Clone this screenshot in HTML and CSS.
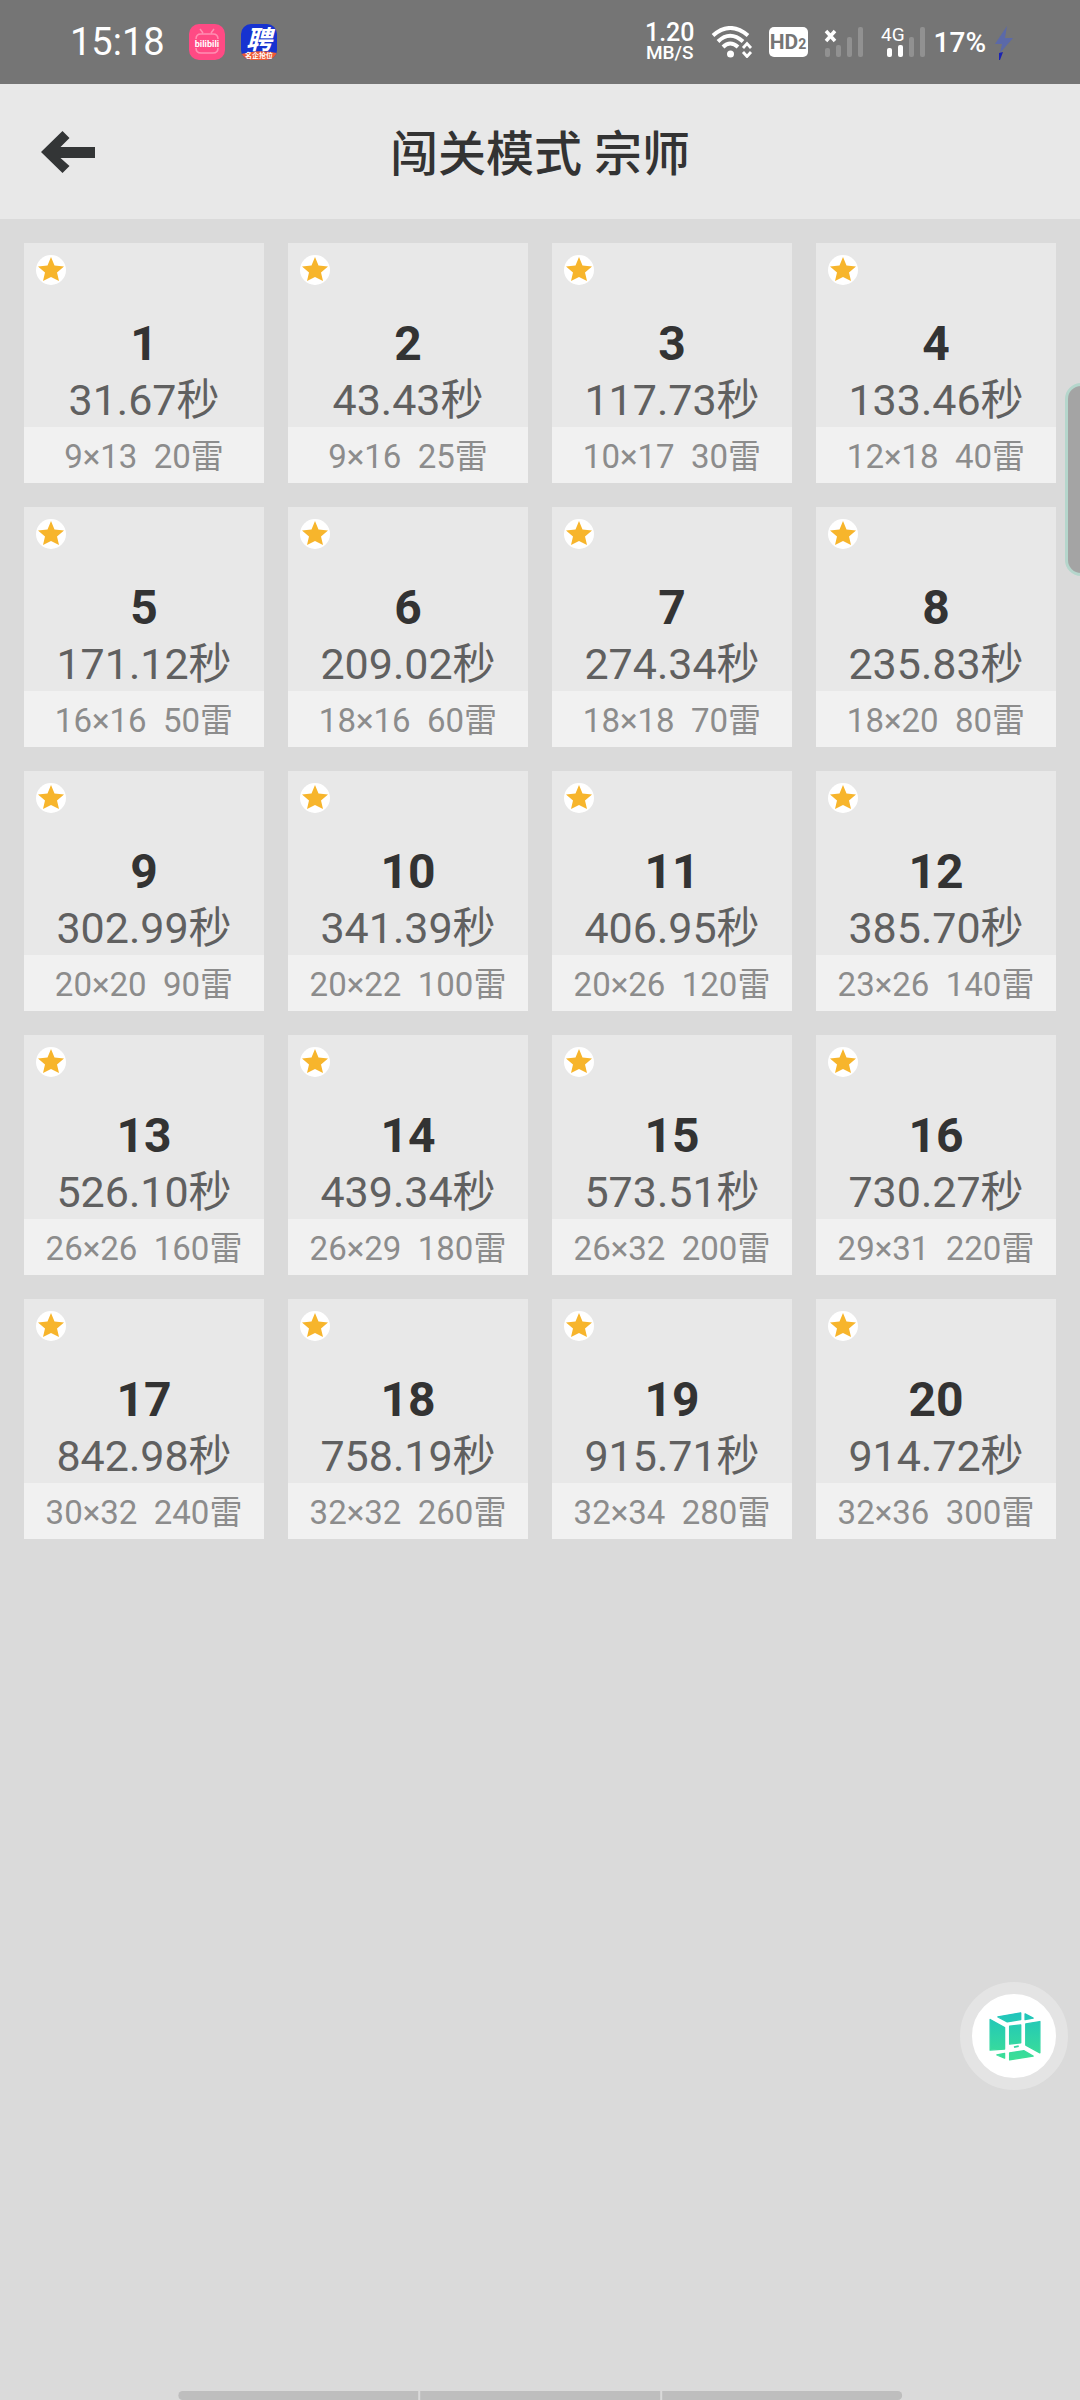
FILE: index.html
```html
<!DOCTYPE html>
<html lang="zh-CN">
  <head>
    <meta charset="UTF-8" />
    <meta name="viewport" content="width=device-width, initial-scale=1.0" />
    <title>闯关模式 宗师</title>
    <link rel="stylesheet" href="styles.css">
  </head>
  <body>
    <div class="status">
      <span class="clock">15:18</span>
      <svg class="app" viewBox="0 0 36 36">
        <rect width="36" height="36" rx="10" fill="#ff4a84" />
        <path d="M11 5l3 4M25 5l-3 4M7 15q0-5 5-5h12q5 0 5 5M7 24q0 5 5 5h12q5 0 5-5" fill="none" stroke="#ff8fb2" stroke-width="1.5" />
        <text x="18" y="23" class="app-bili">bilibili</text>
      </svg>
      <svg class="app" viewBox="0 0 36 36">
        <clipPath id="round"><rect width="36" height="36" rx="10" /></clipPath>
        <g clip-path="url(#round)">
          <rect width="36" height="36" fill="#1733d0" />
          <path d="M0 30q18-5 36-1v7H0z" fill="#ee5a35" />
          <text x="18" y="25" class="app-job">聘</text>
          <text x="18" y="34" class="app-tag">名企抢位</text>
        </g>
      </svg>

      <div class="status-right">
        <div class="speed"><span>1.20</span><small>MB/S</small></div>
        <svg width="42" height="32" viewBox="0 0 42 32">
          <g fill="none" stroke="#fff" stroke-width="4">
            <path d="M2 9.500Q19-5.500 37 9.500" />
            <path d="M7 15.500Q19 4 32 15.500" />
            <path d="M12 21Q19 14 27 21" />
          </g>
          <circle cx="19.500" cy="28" r="3.500" fill="#fff" />
          <path d="M32 22l4-4.500 4 4.500M32 26l4 4.500 4-4.500" fill="none" stroke="#fff" stroke-width="2.800" />
        </svg>
        <span class="hd">HD<small>2</small></span>
        <svg width="40" height="30" viewBox="0 0 40 30">
          <path d="M2 4l9 10M11 4L2 14" stroke="#fff" stroke-width="3.500" />
          <g fill="#919191">
            <rect x="1" y="21" width="5" height="9" rx="2" />
            <rect x="12" y="18" width="5" height="12" rx="2" />
            <rect x="23" y="10" width="5" height="20" rx="2" />
            <rect x="34" width="5" height="30" rx="2" />
          </g>
        </svg>
        <div class="battery">
          <svg width="46" height="42" viewBox="0 -6 46 42">
            <text x="1" y="14" class="net">4G</text>
            <g fill="#fff">
              <rect x="7" y="21" width="5" height="9" rx="2" />
              <rect x="18" y="18" width="5" height="12" rx="2" />
            </g>
            <g fill="#919191">
              <rect x="29" y="10" width="5" height="20" rx="2" />
              <rect x="40" width="5" height="30" rx="2" />
            </g>
          </svg>
          <span>17%</span>
          <svg width="20" height="36" viewBox="0 0 20 36">
            <path d="M13 2L1 20h7l-2 9 13-15h-8z" fill="#5b69a8" />
            <path d="M5 29l4-1-3 8H5z" fill="#1a22b4" />
          </svg>
        </div>
      </div>
    </div>

    <header class="header">
      <button class="back" type="button" aria-label="返回">
        <svg width="54" height="42" viewBox="0 0 54 42">
          <path d="M0 21L21.500 0l7 7-9 9H54v11H19.500l9 8-7 7z" fill="#333536" />
        </svg>
      </button>
      <h1>闯关模式 宗师</h1>
    </header>

    <main class="levels"></main>

    <div class="edge"></div>

    <button class="float" type="button" aria-label="悬浮窗">
      <svg viewBox="98 102 250 250">
        <defs>
          <linearGradient id="cube" gradientUnits="userSpaceOnUse" x1="0" y1="155" x2="0" y2="300">
            <stop offset="0" stop-color="#1fc4bd" />
            <stop offset="1" stop-color="#3de095" />
          </linearGradient>
        </defs>
        <g fill="url(#cube)" stroke="url(#cube)" stroke-width="4" stroke-linejoin="round">
          <path d="M175 170L243 158V178L203 185Z" />
          <path d="M256 161L280 174L256 178Z" />
          <path d="M152 178L195 202V266L152 269Z" />
          <path d="M210 198L243 194V247L210 251Z" />
          <path d="M258 191L300 184V277L258 254Z" />
          <path d="M172 283L195 279V293Z" />
          <path d="M210 277L253 271L280 287L210 298Z" />
        </g>
        <path d="M223 260l14-3" stroke="#3bd5a2" stroke-width="5" />
      </svg>
    </button>

    <nav class="gesture"><i></i><i></i><i></i></nav>

    <script>
      // [用时, 棋盘, 雷数]
      const levels = [
        ["31.67", "9×13", 20],
        ["43.43", "9×16", 25],
        ["117.73", "10×17", 30],
        ["133.46", "12×18", 40],
        ["171.12", "16×16", 50],
        ["209.02", "18×16", 60],
        ["274.34", "18×18", 70],
        ["235.83", "18×20", 80],
        ["302.99", "20×20", 90],
        ["341.39", "20×22", 100],
        ["406.95", "20×26", 120],
        ["385.70", "23×26", 140],
        ["526.10", "26×26", 160],
        ["439.34", "26×29", 180],
        ["573.51", "26×32", 200],
        ["730.27", "29×31", 220],
        ["842.98", "30×32", 240],
        ["758.19", "32×32", 260],
        ["915.71", "32×34", 280],
        ["914.72", "32×36", 300],
      ];

      document.querySelector(".levels").innerHTML = levels
        .map(
          ([time, size, mines], i) => `
          <button class="level" type="button">
            <svg class="star" viewBox="0 0 30 30">
              <circle cx="15" cy="15" r="15" fill="#fff" />
              <path d="M15 2l3.500 8.500 9.500 1-7 6 2 8.500-8-4-8 4 2-8.500-7-6 9.500-1z" fill="#f7b52c" />
            </svg>
            <strong>${i + 1}</strong>
            <span class="time">${time}秒</span>
            <span class="info">${size}&nbsp; ${mines}雷</span>
          </button>`
        )
        .join("");
    </script>
  </body>
</html>
```
FILE: styles.css
```css
* {
  box-sizing: border-box;
}
body {
  margin: 0;
  min-height: 100vh;
  background: #dadada;
  font-family: Roboto, "Noto Sans CJK SC", sans-serif;
}
button {
  padding: 0;
  border: 0;
  font: inherit;
  cursor: pointer;
}
svg {
  display: block;
}

/* 状态栏 */
.status {
  display: flex;
  align-items: center;
  gap: 16px;
  height: 84px;
  padding: 0 66px 0 70px;
  background: #757575;
  color: #fff;
}
.clock {
  margin-right: 8px;
  font-size: 38px;
  line-height: 48px;
}
.app {
  width: 36px;
  height: 36px;
}
.app text {
  fill: #fff;
  text-anchor: middle;
  font-weight: 700;
}
.app .app-bili {
  font-size: 9px;
}
.app .app-job {
  font-size: 26px;
  font-style: italic;
}
.app .app-tag {
  font-size: 7px;
}
.status-right {
  display: flex;
  align-items: center;
  gap: 16px;
  margin-left: auto;
}
.speed {
  display: flex;
  flex-direction: column;
  align-items: center;
  font-size: 25px;
  font-weight: 500;
  line-height: 21px;
}
.speed small {
  font-size: 19px;
  line-height: 20px;
}
.hd {
  width: 39px;
  height: 30px;
  border-radius: 5px;
  background: #fff;
  color: #757575;
  font-size: 21px;
  font-weight: 700;
  line-height: 30px;
  text-align: center;
}
.hd small {
  font-size: 14px;
}
.battery {
  display: flex;
  align-items: center;
  gap: 8px;
  font-size: 28px;
  font-weight: 500;
}
.net {
  fill: #fff;
  font-size: 19px;
  font-weight: 400;
}

/* 标题栏 */
.header {
  display: grid;
  grid-template-columns: 1fr auto 1fr;
  align-items: center;
  height: 135px;
  padding: 0 41px;
  background: #e8e8e8;
}
.back {
  justify-self: start;
  background: none;
}
h1 {
  margin: 0;
  padding-top: 6px;
  color: #333;
  font-size: 48px;
  font-weight: 500;
  line-height: 64px;
}

/* 关卡 */
.levels {
  display: grid;
  grid-template-columns: repeat(4, 1fr);
  gap: 24px;
  padding: 24px;
}
.level {
  position: relative;
  display: flex;
  flex-direction: column;
  justify-content: flex-end;
  aspect-ratio: 1;
  background: #e8e8e8;
  text-align: center;
}
.level > strong,
.level > span {
  width: 100%;
}
.star {
  position: absolute;
  top: 12px;
  left: 12px;
  width: 30px;
  height: 30px;
}
.level strong {
  color: #333;
  font-size: 48px;
  line-height: 58px;
}
.time {
  color: #606060;
  font-size: 43px;
  line-height: 54px;
}
.info {
  padding-top: 4px;
  background: #f1f1f1;
  color: #8c8c8c;
  font-size: 33px;
  line-height: 52px;
}

/* 悬浮元素 */
.edge {
  position: fixed;
  top: 383px;
  right: -20px;
  width: 35px;
  height: 193px;
  border: 3px solid #b5d6cc;
  border-radius: 16px;
  background: #a4a4a4;
}
.float {
  position: fixed;
  right: 12px;
  bottom: 310px;
  width: 108px;
  height: 108px;
  border: 12px solid #e4e4e4;
  border-radius: 50%;
  background: #fff;
}
.gesture {
  position: fixed;
  bottom: 0;
  left: 50%;
  display: flex;
  gap: 2px;
  width: 67%;
  height: 9px;
  border-radius: 6px;
  overflow: hidden;
  transform: translateX(-50%);
}
.gesture i {
  flex: 1;
  background: #bebebe;
}
```
